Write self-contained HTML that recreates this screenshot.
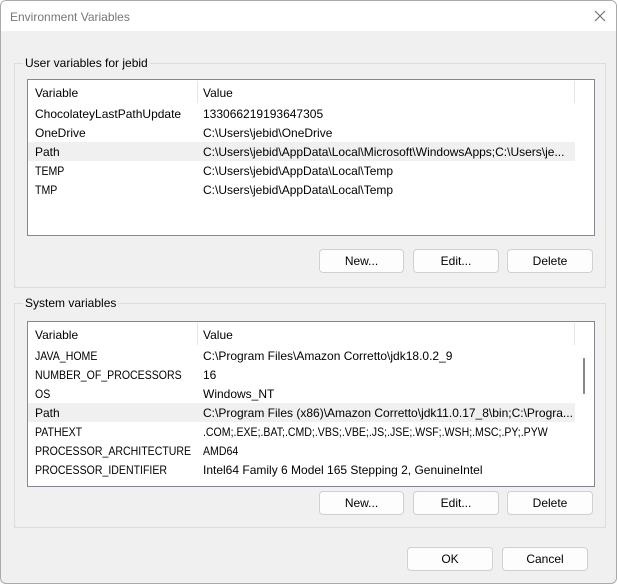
<!DOCTYPE html>
<html><head><style>
*{box-sizing:border-box;margin:0;padding:0}
body{width:618px;height:585px;background:#fff;font-family:"Liberation Sans",sans-serif;font-size:12px;color:#000;position:relative;overflow:hidden}
.win{position:absolute;left:0;top:0;width:617px;height:584px;border:1px solid #aaa;border-radius:6px;background:#f0f0f0;overflow:hidden}
.title{position:absolute;left:0;top:0;width:100%;height:30px;background:#fff;color:#777;padding:9px 0 0 9px;font-size:12px}
.close{position:absolute;right:10px;top:9px;width:12px;height:12px}
.grp{position:absolute;left:13px;width:592px;border:1px solid #dcdcdc}
.lbl{position:absolute;left:8px;top:-8px;background:#f0f0f0;padding:0 2px}
.list{position:absolute;left:26px;width:568px;background:#fff;border:1px solid #828790;overflow:hidden}
.hdr{height:24px;position:relative}
.hdr span{position:absolute;top:6px}
.hdr i{position:absolute;left:169px;top:1px;width:1px;height:22px;background:#e5e5e5}
.hdr b{position:absolute;left:546px;top:1px;width:1px;height:22px;background:#e5e5e5}
.row{height:19px;position:relative;white-space:nowrap}
.row.sel{background:#f0f0f0;width:547px}
.row span{position:absolute;top:3px;left:7px;transform-origin:0 0}
.row span+span{left:175px}
.row span.c{transform:scaleX(.88)}
.btn{position:absolute;height:24px;background:#fdfdfd;border:1px solid #d0d0d0;border-radius:4px;text-align:center;line-height:22px}
</style></head><body>
<div class="win">
<div class="title">Environment Variables
<svg class="close" viewBox="0 0 12 12"><path d="M1 1L11 11M11 1L1 11" stroke="#666" stroke-width="1"/></svg></div>
<div class="grp" style="top:62px;height:225px"><div class="lbl">User variables for jebid</div></div>
<div class="list" style="top:78px;height:157px">
<div class="hdr"><span style="left:7px">Variable</span><i></i><span style="left:175px">Value</span><b></b></div>
<div class="row"><span>ChocolateyLastPathUpdate</span><span>133066219193647305</span></div>
<div class="row"><span>OneDrive</span><span>C:\Users\jebid\OneDrive</span></div>
<div class="row sel"><span>Path</span><span>C:\Users\jebid\AppData\Local\Microsoft\WindowsApps;C:\Users\je...</span></div>
<div class="row"><span class="c">TEMP</span><span>C:\Users\jebid\AppData\Local\Temp</span></div>
<div class="row"><span class="c">TMP</span><span>C:\Users\jebid\AppData\Local\Temp</span></div>
</div>
<div class="btn" style="left:318px;top:248px;width:85px">New...</div>
<div class="btn" style="left:412px;top:248px;width:86px">Edit...</div>
<div class="btn" style="left:506px;top:248px;width:86px">Delete</div>

<div class="grp" style="top:302px;height:225px"><div class="lbl">System variables</div></div>
<div class="list" style="top:320px;height:166px">
<div class="hdr"><span style="left:7px">Variable</span><i></i><span style="left:175px">Value</span><b></b></div>
<div class="row"><span class="c">JAVA_HOME</span><span>C:\Program Files\Amazon Corretto\jdk18.0.2_9</span></div>
<div class="row"><span class="c">NUMBER_OF_PROCESSORS</span><span>16</span></div>
<div class="row"><span class="c">OS</span><span>Windows_NT</span></div>
<div class="row sel"><span>Path</span><span>C:\Program Files (x86)\Amazon Corretto\jdk11.0.17_8\bin;C:\Progra...</span></div>
<div class="row"><span class="c">PATHEXT</span><span class="c">.COM;.EXE;.BAT;.CMD;.VBS;.VBE;.JS;.JSE;.WSF;.WSH;.MSC;.PY;.PYW</span></div>
<div class="row"><span class="c">PROCESSOR_ARCHITECTURE</span><span class="c">AMD64</span></div>
<div class="row"><span class="c">PROCESSOR_IDENTIFIER</span><span>Intel64 Family 6 Model 165 Stepping 2, GenuineIntel</span></div>
<div style="position:absolute;left:555px;top:36px;width:2px;height:36px;background:#888"></div>
</div>
<div class="btn" style="left:318px;top:490px;width:85px">New...</div>
<div class="btn" style="left:412px;top:490px;width:86px">Edit...</div>
<div class="btn" style="left:506px;top:490px;width:86px">Delete</div>

<div class="btn" style="left:406px;top:546px;width:86px">OK</div>
<div class="btn" style="left:501px;top:546px;width:86px">Cancel</div>
</div>
</body></html>
